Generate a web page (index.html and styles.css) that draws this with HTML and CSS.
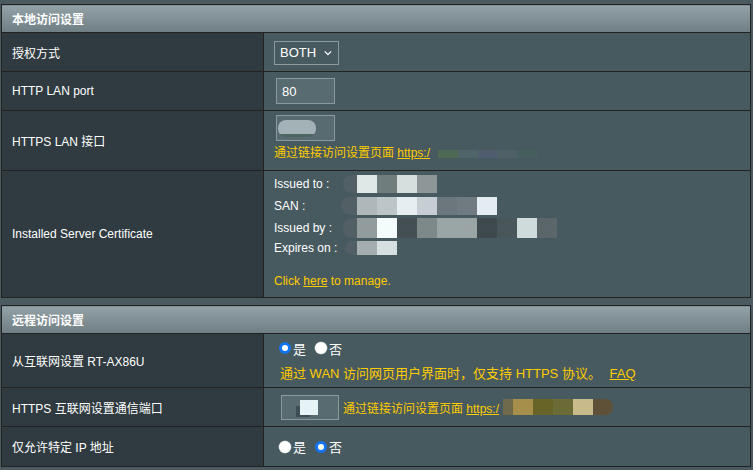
FILE: index.html
```html
<!DOCTYPE html>
<html lang="zh-CN">
<head>
<meta charset="utf-8">
<title>本地访问设置</title>
<link rel="stylesheet" href="styles.css">
</head>
<body>
<table class="form">
  <colgroup><col class="c-label"><col class="c-val"></colgroup>
  <thead><tr class="hd"><th colspan="2">本地访问设置</th></tr></thead>
  <tbody>
    <tr class="h39">
      <td class="label">授权方式</td>
      <td class="val"><div class="select">BOTH <svg class="chev" viewBox="0 0 10 6" width="9" height="6"><path d="M1 1 L5 5 L9 1" fill="none" stroke="#fff" stroke-width="1.6"/></svg></div></td>
    </tr>
    <tr class="h39">
      <td class="label">HTTP LAN port</td>
      <td class="val"><div class="input">80</div></td>
    </tr>
    <tr class="h60">
      <td class="label">HTTPS LAN 接口</td>
      <td class="val top3">
        <div class="input blurred"><span class="blob"></span></div>
        <div class="note lan">通过链接访问设置页面 <span class="link">https:/</span><span class="pix"><i class="c1"></i><i class="c2"></i><i class="c3"></i><i class="c4"></i><i class="c5"></i></span></div>
      </td>
    </tr>
    <tr class="h127">
      <td class="label">Installed Server Certificate</td>
      <td class="val cert">
        <div class="crow r1"><span class="ck">Issued to :</span><span class="blur"><i class="lead"></i><i style="background:#dfe7e7"></i><i style="background:#6f7d7d"></i><i style="background:#d6dede"></i><i style="background:#8d9797"></i></span></div>
        <div class="crow r2"><span class="ck">SAN :</span><span class="blur"><i class="lead"></i><i style="background:#aeb7ba"></i><i style="background:#bcc5c8"></i><i style="background:#e6eef2"></i><i style="background:#c6ced3"></i><i style="background:#6c777d"></i><i style="background:#6f7b80"></i><i style="background:#e3ecf1"></i></span></div>
        <div class="crow r3"><span class="ck">Issued by :</span><span class="blur"><i class="lead"></i><i style="background:#929c9c"></i><i style="background:#f3fbfb"></i><i style="background:#434f53"></i><i style="background:#7d8989"></i><i style="background:#9aa5a6"></i><i style="background:#9ba5a6"></i><i style="background:#3e4a4e"></i><i style="background:#4a575a"></i><i style="background:#cfdada"></i><i style="background:#5a6669"></i></span></div>
        <div class="crow r4"><span class="ck">Expires on :</span><span class="blur"><i class="lead"></i><i style="background:#a4aeb0"></i><i style="background:#d6e0e1"></i></span></div>
        <div class="manage">Click <span class="link">here</span> to manage.</div>
      </td>
    </tr>
  </tbody>
</table>

<table class="form second">
  <colgroup><col class="c-label"><col class="c-val"></colgroup>
  <thead><tr class="hd2"><th colspan="2">远程访问设置</th></tr></thead>
  <tbody>
    <tr class="h54">
      <td class="label">从互联网设置 RT-AX86U</td>
      <td class="val">
        <div class="radios"><span class="radio on"></span><span class="rl">是</span><span class="radio"></span><span class="rl">否</span></div>
        <div class="note wan">通过 WAN 访问网页用户界面时，仅支持 HTTPS 协议。 <span class="link faq">FAQ</span></div>
      </td>
    </tr>
    <tr class="h39">
      <td class="label">HTTPS 互联网设置通信端口</td>
      <td class="val">
        <div class="inline">
          <div class="input port"><span class="wblob"></span></div>
          <span class="note">通过链接访问设置页面 <span class="link">https:/</span></span><span class="pix2"><i style="width:10px;background:#6f6a4c"></i><i style="background:#a58f4a"></i><i style="background:#686326"></i><i style="background:#6b6b38"></i><i style="background:#c8ba8a"></i><i style="background:#5f5138;border-radius:0 8px 8px 0"></i></span>
        </div>
      </td>
    </tr>
    <tr class="h40">
      <td class="label">仅允许特定 IP 地址</td>
      <td class="val">
        <div class="radios"><span class="radio"></span><span class="rl">是</span><span class="radio on"></span><span class="rl">否</span></div>
      </td>
    </tr>
  </tbody>
</table>
</body>
</html>
```
FILE: styles.css
```css
html, body {
  margin: 0;
  padding: 0;
  background: #4b5a5e;
}
body {
  padding: 4px 2px 0 1px;
  font-family: "Liberation Sans", Arial, "Noto Sans CJK SC", sans-serif;
  font-size: 12px;
  color: #fff;
}
.form {
  width: 750px;
  border-collapse: collapse;
  border: 1px solid #222;
  table-layout: fixed;
}
.c-label { width: 262px; }
.form.second { margin-top: 7px; }
.form th {
  padding: 0 0 0 10px;
  text-align: left;
  font-weight: bold;
  font-size: 12px;
  background: linear-gradient(to bottom, #93a2a7, #6e7e83);
  border-bottom: 1px solid #222;
  color: #fff;
}
tr.hd { height: 28px; }
tr.hd2 { height: 28px; }
.form td {
  border: 1px solid #222;
  padding: 0;
  vertical-align: middle;
}
.form td.label {
  padding-left: 10px;
  background: #2f3b40;
}
.form td.val {
  background: #475a5f;
  padding-left: 10px;
}
tr.h39 { height: 39px; }
tr.h40 { height: 40px; }
tr.h54 { height: 54px; }
tr.h60 { height: 60px; }
tr.h127 { height: 127px; }

.select {
  display: inline-flex;
  align-items: center;
  gap: 8px;
  height: 24px;
  padding: 0 6px 0 5px;
  border: 1px solid #8c9a9e;
  font-size: 13px;
  box-sizing: border-box;
  width: 65px;
  margin-top: 1px;
}
.chev { margin-top: 1px; }
.input {
  display: flex;
  align-items: center;
  width: 59px;
  height: 26px;
  box-sizing: border-box;
  margin-left: 2px;
  padding-left: 5px;
  background: #576b70;
  border: 1px solid #8c9a9e;
  font-size: 13px;
}
.form td.top3 { vertical-align: top; padding-top: 4px; }
.blurred { padding-left: 0; }
.blob {
  display: block;
  width: 38px;
  height: 17px;
  border-radius: 8px;
  background: linear-gradient(to bottom, #a3b2b7 0 82%, #4d6560 82%);
  margin-left: 1px;
}
.note {
  color: #ffcc00;
  font-size: 12px;
}
.note.lan { margin-top: 4px; line-height: 16px; }
.link { text-decoration: underline; }
.pix { display: inline-flex; height: 8px; margin-left: 8px; vertical-align: -1px; }
.pix i { display: block; width: 20px; height: 8px; }
.pix .c1 { background: #4e6a55; }
.pix .c2 { background: #50656a; }
.pix .c3 { background: #4f5d6e; }
.pix .c4 { background: #4f6066; }
.pix .c5 { background: #465e5d; }

.form td.cert { vertical-align: top; padding-top: 2px; }
.crow { display: flex; align-items: center; height: 22px; }
.crow.r4 { height: 18px; }
.ck { display: inline-block; width: 69px; font-size: 12px; }
.blur { display: inline-flex; height: 18px; }
.blur i { display: block; width: 20px; height: 18px; }
.blur i.lead { width: 14px; background: #526065; border-radius: 9px 0 0 9px; }
.r2 .blur i.lead { width: 16px; margin-left: -2px; }
.r3 .blur { height: 20px; }
.r3 .blur i { height: 20px; }
.r4 .blur { height: 14px; }
.r4 .blur i { height: 14px; }
.r4 .blur i.lead { width: 12px; margin-left: 2px; }
.manage { color: #ffcc00; margin-top: 17px; line-height: 14px; }

.radios { display: flex; align-items: center; height: 16px; margin-left: 5px; }
.radio {
  width: 12px;
  height: 12px;
  border-radius: 50%;
  background: #fff;
  box-sizing: border-box;
  box-shadow: 0 0 0 0.5px #9aa;
}
.radio.on {
  border: 3px solid #1473f0;
  background: #fff;
  box-shadow: none;
}
.rl { margin: 0 9px 0 2px; font-size: 13px; font-family: "Noto Sans CJK SC", sans-serif; }
.note.wan { margin-top: 7px; margin-left: 6px; font-size: 13px; }
.faq { margin-left: 5px; }
.h54 .val { padding-top: 1px; }

.inline { display: flex; align-items: center; }
.input.port { margin-left: 7px; width: 58px; height: 25px; padding-left: 0; justify-content: flex-start; }
.wblob {
  display: block;
  margin-left: 18px;
  width: 18px;
  height: 15px;
  background: #e5f3f6;
  box-shadow: -6px 4px 0 -2px #3c4e53;
}
.pix2 { display: inline-flex; height: 16px; margin-left: 4px; }
.pix2 i { display: block; width: 20px; height: 16px; }
.inline .note { margin-left: 4px; }
```
